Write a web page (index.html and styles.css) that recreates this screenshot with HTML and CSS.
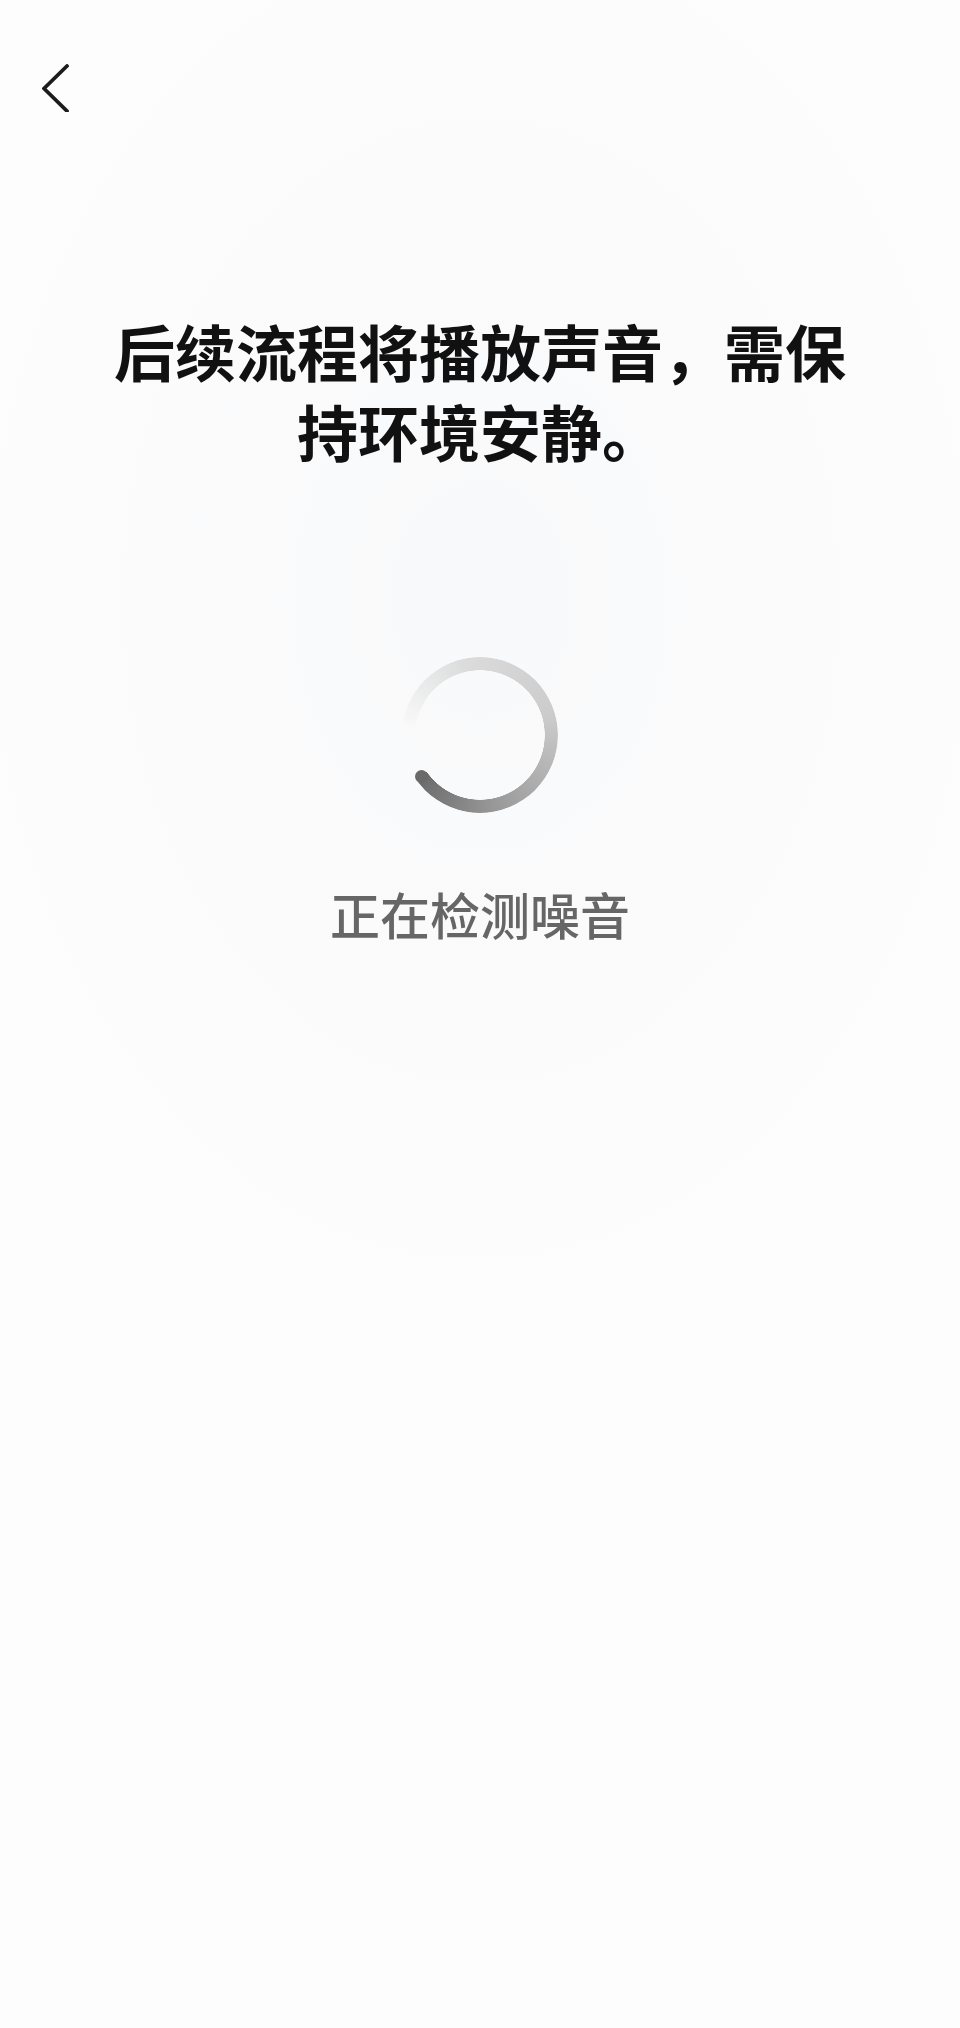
FILE: index.html
```html
<!DOCTYPE html>
<html lang="zh-CN">

<head>
    <meta charset="utf-8" />
    <title>噪音检测</title>
    <link rel="stylesheet" href="styles.css">
</head>

<body>
  <div class="page">
    <div class="topbar">
      <button class="back" aria-label="返回">
        <svg width="28" height="48" viewBox="0 0 28 48">
          <path d="M25 2 L2 24.5 L25 47" fill="none" stroke="#1c1c1c" stroke-width="3.8" stroke-linecap="round" stroke-linejoin="round" />
        </svg>
      </button>
    </div>

    <h1 class="title">后续流程将播放声音，需保持环境安静。</h1>

    <div class="spinner">
      <div class="ring"></div>
      <div class="cap"></div>
    </div>

    <p class="status">正在检测噪音</p>
  </div>
</body>

</html>
```

FILE: styles.css
```css
/*
  colors:
    page bg    #fcfcfd
    title      #111111
    status     #666666
 */
body {
  margin: 0;
  background-color: #fcfcfd;
  font-family: "Noto Sans CJK SC", "Noto Sans", sans-serif;
}

div.page {
  min-height: 2028px;
  background: radial-gradient(ellipse 520px 700px at 480px 600px, #f8f9fa 0%, #fbfbfc 60%, #fdfdfd 100%);
}

div.topbar {
  height: 176px;
  display: flex;
  align-items: center;
  padding-left: 42px;
}

button.back {
  border: none;
  background-color: transparent;
  padding: 0;
  width: 28px;
  height: 48px;
  display: flex;
}

h1.title {
  margin: 135px 0 0 0;
  padding: 0 90px;
  text-align: center;
  font-size: 61px;
  line-height: 80px;
  font-weight: 700;
  color: #111111;
}

div.spinner {
  position: relative;
  width: 156px;
  height: 156px;
  margin: 186px auto 0 auto;
}

div.ring {
  width: 156px;
  height: 156px;
  border-radius: 50%;
  background: conic-gradient(from 276deg,
    rgba(215, 215, 215, 0) 0deg,
    #dcdcdc 70deg,
    #cbcbcb 160deg,
    #9a9a9a 250deg,
    #6a6a6a 319deg,
    rgba(0, 0, 0, 0) 319.5deg);
  -webkit-mask: radial-gradient(circle, transparent 64.5px, #000 65px);
  mask: radial-gradient(circle, transparent 64.5px, #000 65px);
}

div.cap {
  position: absolute;
  left: 13px;
  top: 112.5px;
  width: 13px;
  height: 13px;
  border-radius: 50%;
  background-color: #6a6a6a;
}

p.status {
  margin: 68px 0 0 0;
  text-align: center;
  font-size: 50px;
  line-height: 64px;
  font-weight: 500;
  color: #666666;
}
```
